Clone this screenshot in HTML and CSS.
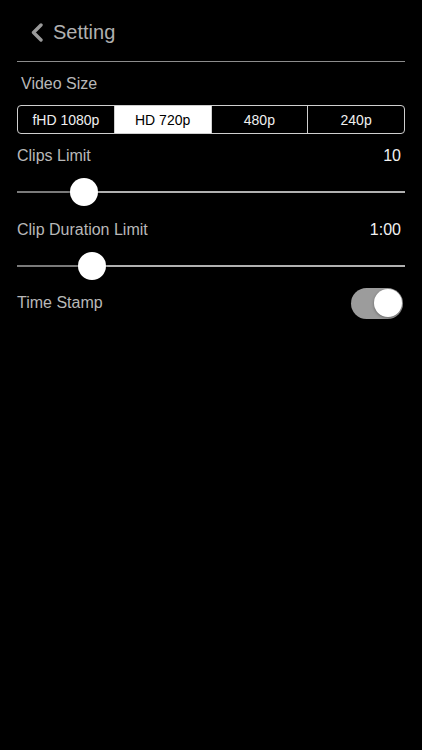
FILE: index.html
```html
<!DOCTYPE html>
<html>
<head>
<meta charset="utf-8">
<link rel="stylesheet" href="styles.css">
</head>
<body>
<div class="page">
  <header class="header">
    <svg class="chev" width="14" height="19" viewBox="0 0 14 19"><path d="M11 2 L3.5 9.5 L11 17" fill="none" stroke="#9a9a9a" stroke-width="3.4" stroke-linecap="round" stroke-linejoin="round"/></svg>
    <span class="title">Setting</span>
  </header>
  <div class="label-row indent"><span class="label">Video Size</span></div>
  <div class="segmented">
    <div class="seg">fHD 1080p</div>
    <div class="seg active">HD 720p</div>
    <div class="seg">480p</div>
    <div class="seg">240p</div>
  </div>
  <div class="label-row r1"><span class="label">Clips Limit</span><span class="value">10</span></div>
  <div class="slider s1">
    <div class="track"><div class="fill" style="width:67px"></div></div>
    <div class="thumb" style="left:67px"></div>
  </div>
  <div class="label-row r2"><span class="label">Clip Duration Limit</span><span class="value">1:00</span></div>
  <div class="slider s2">
    <div class="track"><div class="fill" style="width:75px"></div></div>
    <div class="thumb" style="left:75px"></div>
  </div>
  <div class="label-row r3"><span class="label">Time Stamp</span><div class="toggle"><div class="knob"></div></div></div>
</div>
</body>
</html>
```
FILE: styles.css
```css
html, body {
  margin: 0;
  padding: 0;
  background: #000;
}
body {
  width: 422px;
  height: 750px;
  font-family: "Liberation Sans", Arial, sans-serif;
  color: #b8b8b8;
}
.page {
  padding: 0 17px;
}
.header {
  height: 62px;
  display: flex;
  align-items: center;
  border-bottom: 1.5px solid #8c8c8c;
  padding-left: 13px;
  padding-top: 3px;
  box-sizing: border-box;
}
.chev {
  display: block;
  margin-right: 9px;
}
.title {
  font-size: 20px;
  color: #b0b0b0;
}
.label-row {
  display: flex;
  align-items: center;
  justify-content: space-between;
  height: 43px;
}
.indent {
  padding-left: 4px;
}
.label {
  font-size: 16px;
  color: #b8b8b8;
}
.value {
  font-size: 16px;
  color: #f2f2f2;
  padding-right: 4px;
}
.segmented {
  display: flex;
  height: 29px;
  border: 1px solid #cfcfcf;
  border-radius: 4px;
  box-sizing: border-box;
  overflow: hidden;
}
.seg {
  flex: 1;
  display: flex;
  align-items: center;
  justify-content: center;
  font-size: 14px;
  color: #f0f0f0;
  border-left: 1px solid #cfcfcf;
}
.seg:first-child {
  border-left: none;
}
.seg.active {
  background: #fff;
  color: #000;
}
.r1 {
  height: 43px;
}
.r2 {
  height: 45px;
}
.r3 {
  height: 46px;
}
.slider {
  position: relative;
  height: 30px;
  display: flex;
  align-items: center;
}
.s2 {
  height: 28px;
}
.track {
  width: 100%;
  height: 2px;
  background: #b0b0b0;
  position: relative;
}
.fill {
  height: 2px;
  background: #7a7a7a;
}
.thumb {
  position: absolute;
  top: 50%;
  width: 28px;
  height: 28px;
  margin-left: -14px;
  margin-top: -14px;
  border-radius: 50%;
  background: #fff;
  box-shadow: 0 1px 3px rgba(0,0,0,0.4);
}
.toggle {
  width: 52px;
  height: 31px;
  border-radius: 16px;
  background: #9c9c9c;
  display: flex;
  align-items: center;
  justify-content: flex-end;
  padding: 0 1.5px;
  box-sizing: border-box;
  margin-right: 2px;
}
.knob {
  width: 28px;
  height: 28px;
  border-radius: 50%;
  background: #fff;
  box-shadow: 0 1px 3px rgba(0,0,0,0.35);
}
```
